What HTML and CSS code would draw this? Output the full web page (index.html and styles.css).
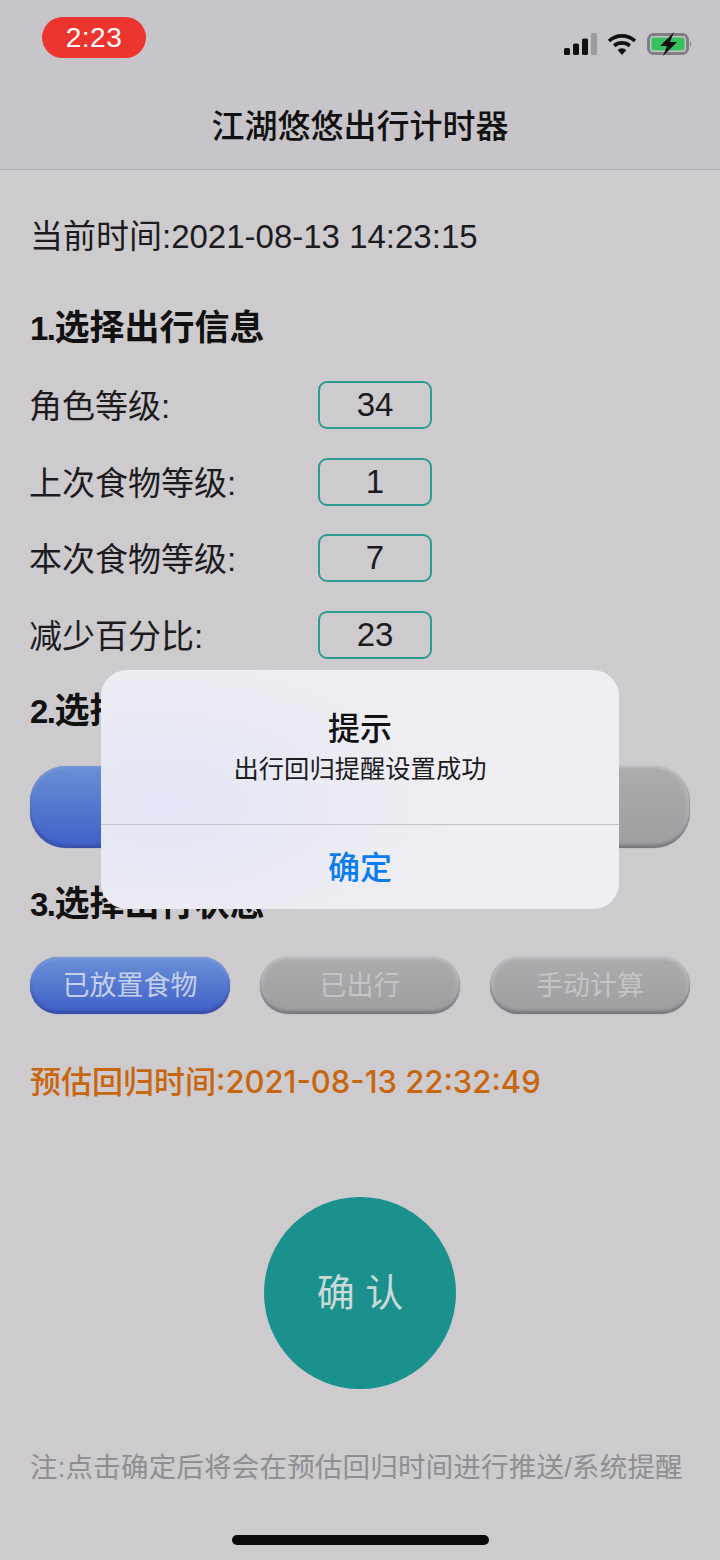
FILE: index.html
```html
<!DOCTYPE html>
<html lang="zh">
<head>
<meta charset="utf-8">
<title>江湖悠悠出行计时器</title>
<link rel="stylesheet" href="styles.css">
</head>
<body>
<div class="screen">
  <header class="top">
    <div class="status">
      <div class="clock">2:23</div>
      <div class="status-icons">
        <svg class="sig" width="33" height="22" viewBox="0 0 33 22"><rect x="0" y="15" width="6" height="7" rx="1.5" fill="#111"/><rect x="9" y="10.5" width="6" height="11.5" rx="1.5" fill="#111"/><rect x="18" y="5.5" width="6" height="16.5" rx="1.5" fill="#111"/><rect x="27" y="0" width="6" height="22" rx="1.5" fill="#9b9a9d"/></svg>
        <svg class="wifi" width="30" height="22" viewBox="0 0 30 22"><path d="M2 8 A19 19 0 0 1 28 8" fill="none" stroke="#111" stroke-width="3.6"/><path d="M7.2 12.8 A12 12 0 0 1 22.8 12.8" fill="none" stroke="#111" stroke-width="3.6"/><path d="M15 22 L10.6 17 A6.4 6.4 0 0 1 19.4 17 Z" fill="#111"/></svg>
        <svg class="batt" width="46" height="24" viewBox="0 0 46 24"><rect x="1.500" y="2.500" width="39" height="19" rx="5" fill="none" stroke="#7f7e81" stroke-width="3"/><rect x="4.500" y="5.500" width="33" height="13" rx="2" fill="#35c25c"/><path d="M43 9 a4 4 0 0 1 0 6z" fill="#858487"/><path d="M27 0 L13 14 H20 L16 24 L30 10 H23 Z" fill="#111"/></svg>
      </div>
    </div>
    <h1 class="title">江湖悠悠出行计时器</h1>
  </header>

  <main class="content">
    <p class="now">当前时间:2021-08-13 14:23:15</p>

    <h2 class="heading h-one"><span class="num">1.</span>选择出行信息</h2>
    <div class="fields">
      <div class="field"><span class="label">角色等级:</span><span class="box">34</span></div>
      <div class="field"><span class="label">上次食物等级:</span><span class="box">1</span></div>
      <div class="field"><span class="label">本次食物等级:</span><span class="box">7</span></div>
      <div class="field"><span class="label">减少百分比:</span><span class="box">23</span></div>
    </div>

    <h2 class="heading h-two"><span class="num">2.</span>选择出行方式</h2>
    <div class="btns tall">
      <div class="btn on"></div>
      <div class="btn"></div>
      <div class="btn"></div>
    </div>

    <h2 class="heading h-three"><span class="num">3.</span>选择出行状态</h2>
    <div class="btns short">
      <div class="btn on">已放置食物</div>
      <div class="btn">已出行</div>
      <div class="btn">手动计算</div>
    </div>

    <p class="eta">预估回归时间:2021-08-13 22:32:49</p>

    <div class="circle-wrap"><div class="circle">确 认</div></div>

    <p class="note">注:点击确定后将会在预估回归时间进行推送/系统提醒</p>
  </main>

  <div class="home"></div>

  <div class="dialog">
    <div class="dialog-body">
      <div class="dialog-title">提示</div>
      <div class="dialog-msg">出行回归提醒设置成功</div>
    </div>
    <div class="dialog-action">确定</div>
  </div>
</div>
</body>
</html>
```

FILE: styles.css
```css
* { box-sizing: border-box; }
html, body { margin: 0; padding: 0; }
body {
  width: 720px;
  height: 1560px;
  overflow: hidden;
  font-family: "Liberation Sans", "Noto Sans CJK SC", sans-serif;
  color: #1c1c1e;
}
.screen {
  position: relative;
  width: 720px;
  height: 1560px;
  background: #cdcbce;
}
.top {
  height: 170px;
  background: #c7c5c9;
  border-bottom: 1px solid #aeadb0;
}
.status {
  display: flex;
  justify-content: space-between;
  padding: 17px 27px 0 42px;
  height: 85px;
}
.clock {
  width: 104px;
  height: 41px;
  border-radius: 21px;
  background: #ec352e;
  color: #fff;
  font-size: 28px;
  letter-spacing: 0.5px;
  line-height: 41px;
  text-align: center;
}
.status-icons {
  display: flex;
  align-items: center;
  gap: 10px;
  height: 22px;
  margin-top: 16px;
}
.status-icons svg { display: block; flex: none; }
.title {
  margin: 0;
  height: 84px;
  font-size: 33px;
  font-weight: 500;
  line-height: 84px;
  text-align: center;
  color: #111;
}
.content { padding: 0 30px; }
.now {
  margin: 45px 0 0;
  font-size: 33px;
  line-height: 44px;
}
.heading {
  height: 44px;
  margin: 0;
  font-size: 35px;
  font-weight: 700;
  line-height: 44px;
  color: #111;
}
.num {
  font-size: 33px;
  line-height: 1;
  letter-spacing: -1.500px;
}
.h-one { margin-top: 47px; }
.fields {
  display: flex;
  flex-direction: column;
  gap: 28.700px;
  margin-top: 30px;
}
.field {
  display: grid;
  grid-template-columns: 288px 114px;
  align-items: center;
  height: 48px;
}
.label {
  font-size: 33px;
  margin: 0 0 2px -1px;
}
.box {
  height: 48px;
  border: 2px solid #2d9a94;
  border-radius: 9px;
  font-size: 33px;
  line-height: 44px;
  text-align: center;
}
.h-two { margin-top: 31px; }
.h-three { margin-top: 34px; }
.btns {
  display: grid;
  grid-template-columns: repeat(3, 200px);
  column-gap: 30px;
}
.tall { margin-top: 33px; }
.tall .btn { height: 82px; border-radius: 36px; }
.short { margin-top: 31px; }
.btn {
  height: 57px;
  border-radius: 28px;
  background: linear-gradient(#acabae, #9e9da0);
  box-shadow: inset 0 -3px 3px #77767a, inset 0 2px 2px #bdbcbf, inset 3px 0 3px #b9b8bb, inset -3px 0 3px #b9b8bb, 0 0 1px #858488;
  color: #c4c3c6;
  font-size: 27px;
  line-height: 59px;
  text-align: center;
}
.btn.on {
  background: linear-gradient(#6a90d6, #3f5fc8);
  box-shadow: inset 0 -3px 3px #3a50a8, inset 0 2px 3px #7b9ad8, 0 0 1px #5468b0;
  color: #c5d0ea;
}
.eta {
  margin: 46px 0 0;
  font-family: Inter, "Noto Sans CJK SC", sans-serif;
  font-size: 31px;
  font-weight: 500;
  line-height: 44px;
  color: #c8660f;
}
.circle-wrap {
  display: flex;
  justify-content: center;
  margin-top: 93px;
}
.circle {
  width: 192px;
  height: 192px;
  border-radius: 50%;
  background: #1a918c;
  color: #c9d9d8;
  font-size: 38px;
  line-height: 192px;
  text-align: center;
}
.note {
  margin: 57px 0 0;
  font-size: 27.500px;
  letter-spacing: 0.200px;
  line-height: 44px;
  white-space: nowrap;
  color: #8f8e91;
}
.home {
  position: absolute;
  left: 232px;
  top: 1535px;
  width: 257px;
  height: 10px;
  border-radius: 5px;
  background: #0b0b0c;
}
.dialog {
  position: absolute;
  left: 101px;
  top: 670px;
  width: 518px;
  height: 239px;
  border-radius: 26px;
  overflow: hidden;
  background: radial-gradient(ellipse 60% 70% at 12% 55%, #e3e6f5 0%, rgba(233, 234, 243, 0) 100%), #efeef2;
  text-align: center;
}
.dialog-body {
  height: 155px;
  padding-top: 39px;
  border-bottom: 1px solid #c5c5ca;
}
.dialog-title {
  font-size: 32px;
  font-weight: 500;
  line-height: 40px;
  color: #111;
}
.dialog-msg {
  font-size: 25.300px;
  line-height: 40px;
  color: #1c1c1e;
}
.dialog-action {
  height: 84px;
  padding-top: 1px;
  font-size: 32px;
  font-weight: 500;
  line-height: 84px;
  color: #0a7cf0;
}
```
